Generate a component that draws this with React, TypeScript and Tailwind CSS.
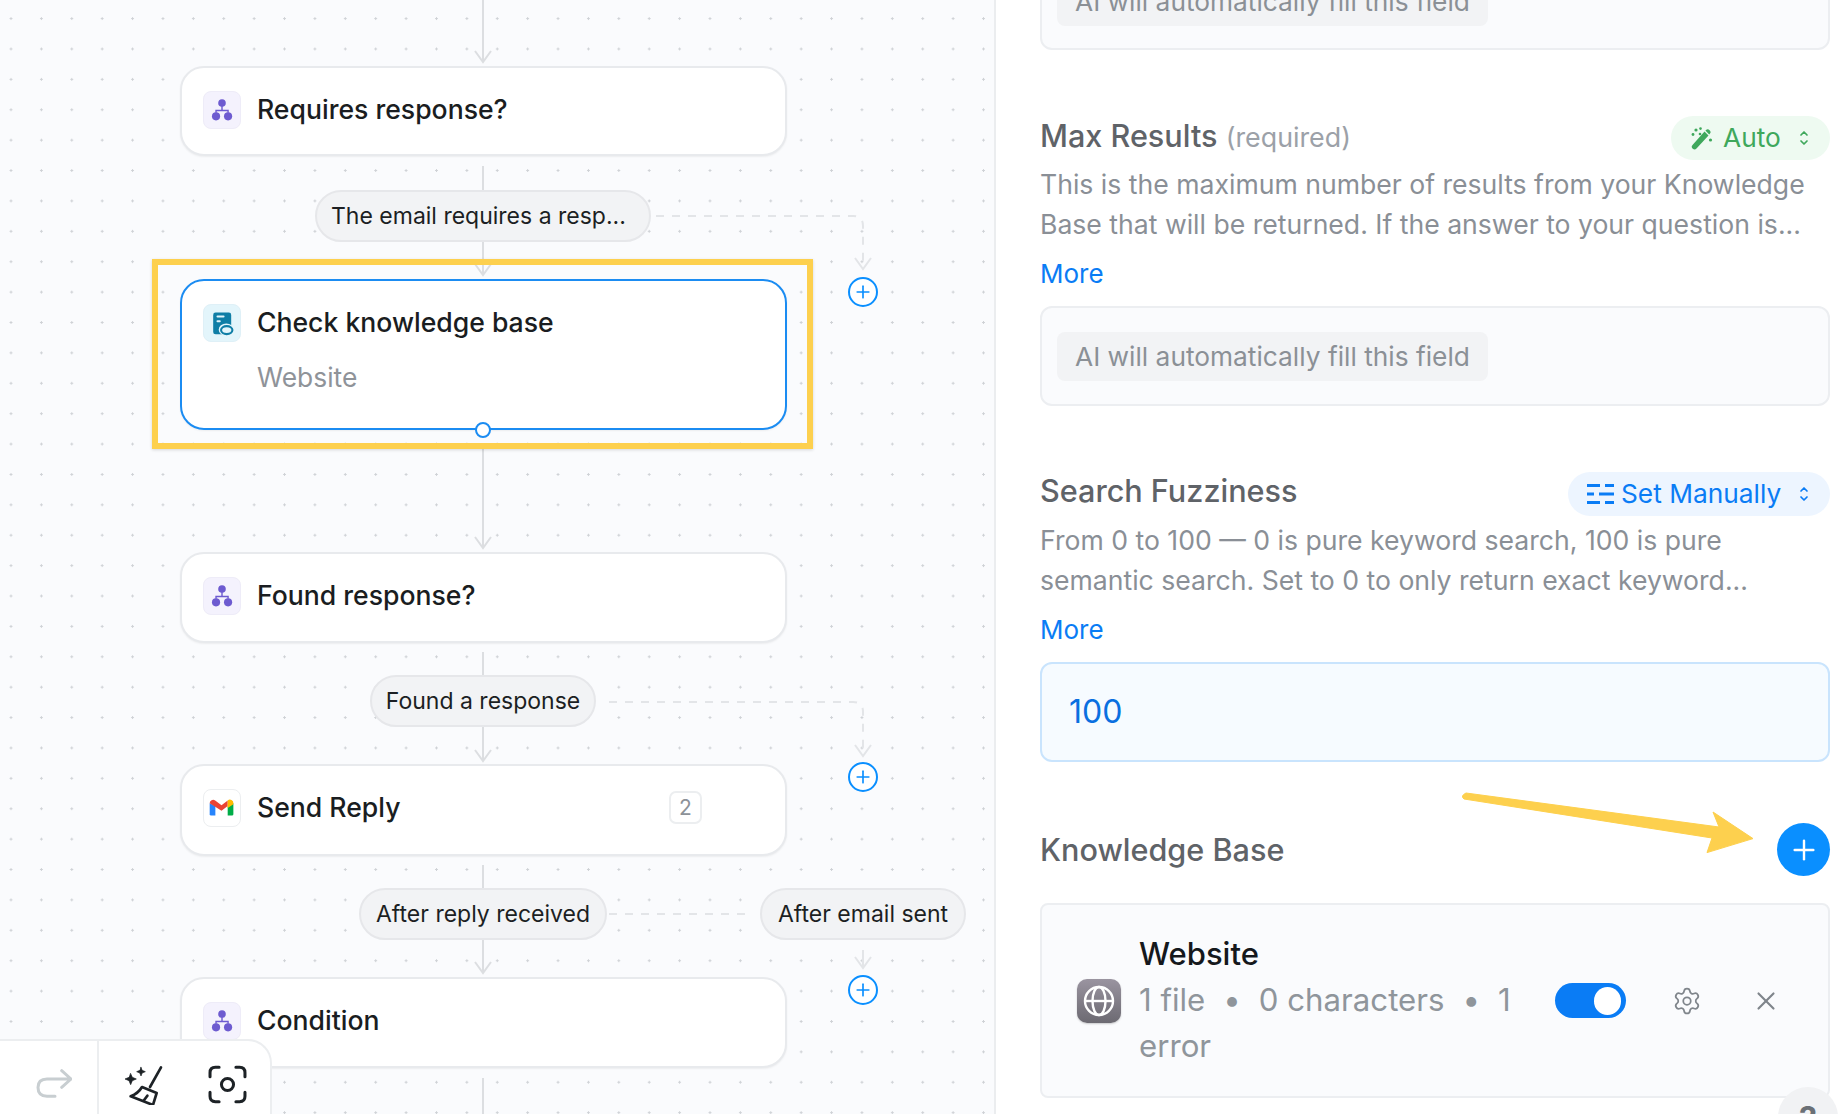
import React from "react";
import { Settings, X, Plus } from "lucide-react";

const BranchIcon = () => (
  <svg width="38" height="38" viewBox="0 0 38 38" fill="#6d5bd0">
    <circle cx="19" cy="11.7" r="4" />
    <circle cx="12.7" cy="25.7" r="4.3" />
    <circle cx="25.4" cy="25.7" r="4.3" />
    <path d="M19 14v5.5M12.7 22v-2.5h12.7V22" fill="none" stroke="#6d5bd0" strokeWidth="1.5" />
  </svg>
);

const KbIcon = () => (
  <svg width="38" height="38" viewBox="0 0 38 38">
    <rect x="9.7" y="8" width="19" height="23" rx="2.5" fill="#0f7ea6" />
    <rect x="13.2" y="11" width="8.5" height="2.2" rx="1" fill="#e3f5fb" />
    <rect x="13.2" y="16" width="4.5" height="2.2" rx="1" fill="#e3f5fb" />
    <ellipse cx="23.5" cy="26" rx="8" ry="6.5" fill="#e3f5fb" />
    <ellipse cx="24" cy="26.5" rx="6" ry="4.2" fill="none" stroke="#0f7ea6" strokeWidth="2.2" />
  </svg>
);

const GmailIcon = () => (
  <svg width="38" height="38" viewBox="0 0 38 38">
    <path d="M6 14v11.5A1.5 1.5 0 0 0 7.5 27H12V17Z" fill="#2684fc" />
    <path d="M25 17v10h4.5a1.5 1.5 0 0 0 1.5-1.5V14Z" fill="#00ac47" />
    <path d="M6 14a3.6 3.6 0 0 1 5.8-2.9L18.5 16l6.5-5v6l-6.5 5L6 14Z" fill="#ea4335" />
    <path d="M25 11a3.6 3.6 0 0 1 6 3v1l-6 4Z" fill="#ffba00" />
  </svg>
);

function Node({ className, icon, tile, title, sub, badge, border = "border-2 border-[#e8eaed]" }: { className: string; icon: React.ReactNode; tile: string; title: string; sub?: string; badge?: string; border?: string }) {
  return (
    <div className={`absolute left-[180px] w-[607px] rounded-[24px] bg-white shadow-[0_1px_2px_rgba(0,0,0,0.06)] ${border} ${className}`}>
      <div className="flex items-start pl-[21px] pt-[23px]">
        <div className={`flex h-[38px] w-[38px] shrink-0 items-center justify-center rounded-[8px] border ${tile}`}>{icon}</div>
        <div className="ml-[16px] -mt-[1px] text-[26.6px] leading-[38px] font-[450] text-[#1a1d21]">{title}</div>
        {badge && (
          <div className="ml-auto mr-[83px] mt-[2px] flex h-[33px] w-[33px] items-center justify-center rounded-[7px] border-2 border-[#eceef0] text-[21px] text-[#8d9298]">
            {badge}
          </div>
        )}
      </div>
      {sub && <div className="ml-[75px] mt-[16px] text-[26.4px] leading-[38px] text-[#8f9399]">{sub}</div>}
    </div>
  );
}

function Pill({ className, children }: { className: string; children: string }) {
  return (
    <div className={`absolute flex h-[52px] items-center rounded-full border-2 border-[#e6e7ea] bg-[#f2f3f5] text-[23px] whitespace-nowrap text-[#1c1f23] ${className}`}>
      {children}
    </div>
  );
}

function AddBtn({ className }: { className: string }) {
  return (
    <div className={`absolute left-[848px] flex h-[30px] w-[30px] items-center justify-center rounded-full border-[2.5px] border-[#0a8fff] bg-white ${className}`}>
      <Plus size={20} strokeWidth={2} color="#0a8fff" />
    </div>
  );
}

const Updown = () => (
  <svg width="12" height="16" viewBox="0 0 12 16" fill="none" stroke="currentColor" strokeWidth="1.7" strokeLinecap="round" strokeLinejoin="round">
    <path d="M3 5l3-3 3 3M3 11l3 3 3-3" />
  </svg>
);

const Wand = () => (
  <svg width="23" height="23" viewBox="0 0 23 23" fill="#3fa85c">
    <path d="M14.5 4.5l4 4L6.5 21.5a2.4 2.4 0 0 1-4-3.5Z" />
    <path d="M15.8 3.2a2.6 2.6 0 0 1 3.8 0 2.6 2.6 0 0 1 0 3.8l-.4.4-3.8-3.8Z" />
    <circle cx="6" cy="3" r="1.6" />
    <circle cx="10.5" cy="1.6" r="1.3" />
    <circle cx="3" cy="7.5" r="1.4" />
    <circle cx="10" cy="7" r="1.3" />
    <circle cx="20.5" cy="13" r="1.6" />
  </svg>
);

const Manual = () => (
  <svg width="27" height="22" viewBox="0 0 27 22" stroke="#0a7cf5" strokeWidth="2.8" fill="none">
    <path d="M0 2.5h13M18 2.5h9M0 11h7M12 11h15M0 19.5h13M18 19.5h9" />
  </svg>
);

function FieldBox({ children, className = "" }: { children: React.ReactNode; className?: string }) {
  return (
    <div className={`h-[100px] rounded-[12px] border-2 border-[#eceef1] bg-[#fafbfd] pl-[15px] ${className}`}>
      <div className="inline-flex h-[49px] w-[431px] items-center rounded-[8px] bg-[#f2f3f5] pl-[18px] text-[26.3px] text-[#8b9096]">{children}</div>
    </div>
  );
}

function ModePill({ tone, icon, label, width, gap }: { tone: string; icon: React.ReactNode; label: string; width: string; gap: string }) {
  return (
    <div className={`flex h-[44px] items-center rounded-full pl-[19px] pr-[20px] text-[26.3px] ${tone} ${width}`}>
      {icon}
      <span className={`flex-1 ${gap}`}>{label}</span>
      <Updown />
    </div>
  );
}

const Head = ({ x, y }: { x: number; y: number }) => <path d={`M${x - 8} ${y - 11}L${x} ${y}L${x + 8} ${y - 11}`} />;

export default function App() {
  return (
    <div className="relative flex h-[1114px] w-[1848px] overflow-hidden bg-white font-['Inter',sans-serif]">
      <div className="relative h-full w-[996px] shrink-0 border-r-2 border-[#ebedef] bg-[#fafbfd] bg-[radial-gradient(circle,#cfd2d6_1px,transparent_1.3px)] bg-size-[30.4px_30.4px] bg-position-[-4.2px_3.4px]">
        <svg className="absolute left-0 top-0" width="994" height="1114" fill="none" stroke="#dcdee1" strokeWidth="2">
          <path d="M483 0V62M483 166V275M483 449V548M483 652V761M483 865V973M483 1078V1114" />
          <Head x={483} y={62} />
          <Head x={483} y={275} />
          <Head x={483} y={548} />
          <Head x={483} y={761} />
          <Head x={483} y={973} />
          <g stroke="#e3e5e8">
            <path d="M656 216H853Q863 216 863 226V262M609 702H853Q863 702 863 712V748M609 914H753" strokeDasharray="8 8" />
            <Head x={863} y={269} />
            <Head x={863} y={756} />
            <path d="M863 950V968" />
            <Head x={863} y={968} />
          </g>
        </svg>

        <Node className="top-[66px] h-[90px]" tile="border-[#eeecf8] bg-[#f4f2fd]" icon={<BranchIcon />} title="Requires response?" />
        <Pill className="left-[315px] top-[190px] w-[336px] pl-[14px]">The email requires a resp...</Pill>
        <Node className="top-[279px] h-[151px]" border="border-2 border-[#1b8cf2]" tile="border-[#dff0f7] bg-[#e3f5fb]" icon={<KbIcon />} title="Check knowledge base" sub="Website" />
        <div className="absolute left-[475px] top-[422px] h-[16px] w-[16px] rounded-full border-2 border-[#1b8cf2] bg-white" />
        <div className="absolute left-[152px] top-[259px] h-[190px] w-[661px] border-[6px] border-[#fdd04e] shadow-[0_1px_3px_rgba(0,0,0,0.15)]" />
        <AddBtn className="top-[277px]" />

        <Node className="top-[552px] h-[91px]" tile="border-[#eeecf8] bg-[#f4f2fd]" icon={<BranchIcon />} title="Found response?" />
        <Pill className="left-[370px] top-[675px] w-[226px] justify-center">Found a response</Pill>
        <AddBtn className="top-[762px]" />

        <Node className="top-[764px] h-[92px]" tile="border-[#eceef0] bg-white" icon={<GmailIcon />} title="Send Reply" badge="2" />
        <Pill className="left-[359px] top-[888px] w-[248px] justify-center">After reply received</Pill>
        <Pill className="left-[760px] top-[888px] w-[206px] justify-center">After email sent</Pill>
        <AddBtn className="top-[975px]" />

        <Node className="top-[977px] h-[91px]" tile="border-[#eeecf8] bg-[#f4f2fd]" icon={<BranchIcon />} title="Condition" />

        <div className="absolute bottom-0 left-0 flex h-[75px] w-[272px] rounded-tr-[24px] border-r-2 border-t-2 border-[#eceef0] bg-white">
          <div className="flex w-[99px] items-center border-r-2 border-[#eceef0] pl-[36px] pt-[12px]">
            <svg width="36" height="29" viewBox="0 0 36 29" fill="none" stroke="#c8ced1" strokeWidth="3" strokeLinecap="round" strokeLinejoin="round">
              <path d="M25.7 1.7L35 10l-9.3 8.3M35 10H11Q2 10 2 18.5T11 27.3H19" />
            </svg>
          </div>
          <div className="flex flex-1 items-center gap-[44px] pl-[26px] pt-[14px]">
            <svg width="38" height="40" viewBox="375 130 114 120" fill="none" stroke="#1d2226" strokeWidth="8" strokeLinecap="round" strokeLinejoin="round">
              <path d="M483 137L450 196" />
              <path d="M426 196L470 214L459 250L392 224Q415 215 426 196Z" />
              <path d="M432 236L442 222" />
              <path d="M392 156l5 11 12 5-12 5-5 12-5-12-12-5 12-5Z" fill="#1d2226" strokeWidth="2" />
              <path d="M423 137l3.5 9 9.5 4-9.5 4-3.5 9-3.5-9-9.5-4 9.5-4Z" fill="#1d2226" strokeWidth="2" />
            </svg>
            <svg width="41" height="41" viewBox="622 134 122 122" fill="none" stroke="#1d2226" strokeWidth="9" strokeLinecap="round">
              <path d="M631 172V160Q631 144 647 144H658M708 144H719Q735 144 735 160V172M735 218V230Q735 246 719 246H708M658 246H647Q631 246 631 230V218" />
              <circle cx="683" cy="195" r="18" />
            </svg>
          </div>
        </div>
      </div>

      <div className="h-full flex-1 pl-[44px] pr-[18px]">
        <FieldBox className="-mt-[50px] pt-[25px]">AI will automatically fill this field</FieldBox>

        <div className="mt-[66px] flex h-[44px] items-center justify-between">
          <div className="pb-[4px] text-[30.6px] font-[450] text-[#5f6368]">
            Max Results <span className="text-[26.8px] font-normal text-[#9ca1a8]">(required)</span>
          </div>
          <ModePill tone="bg-[#eefaf1] text-[#3fa85c]" icon={<Wand />} label="Auto" width="w-[159px]" gap="ml-[10px]" />
        </div>
        <div className="mt-[4px] text-[26.6px] leading-[40px] whitespace-nowrap text-[#8a8f96]">
          <div>This is the maximum number of results from your Knowledge</div>
          <div>Base that will be returned. If the answer to your question is...</div>
        </div>
        <div className="mt-[10px] text-[26px] leading-[40px] text-[#0a7cf5]">More</div>
        <FieldBox className="mt-[12px] pt-[24px]">AI will automatically fill this field</FieldBox>

        <div className="mt-[66px] flex h-[44px] items-center justify-between">
          <div className="pb-[6px] text-[30.6px] font-[450] text-[#5f6368]">Search Fuzziness</div>
          <ModePill tone="bg-[#edf5ff] text-[#0a7cf5]" icon={<Manual />} label="Set Manually" width="w-[262px]" gap="ml-[7px]" />
        </div>
        <div className="mt-[4px] text-[26.6px] leading-[40px] whitespace-nowrap text-[#8a8f96]">
          <div>From 0 to 100 — 0 is pure keyword search, 100 is pure</div>
          <div>semantic search. Set to 0 to only return exact keyword...</div>
        </div>
        <div className="mt-[10px] text-[26px] leading-[40px] text-[#0a7cf5]">More</div>
        <div className="mt-[12px] flex h-[100px] items-center rounded-[12px] border-2 border-[#c9e4fd] bg-[#f6fbff] pl-[27px] text-[32px] text-[#0a6fe0]">100</div>

        <div className="mt-[61px] flex h-[53px] items-center justify-between">
          <div className="pt-[1px] text-[30.6px] font-[450] text-[#5f6368]">Knowledge Base</div>
          <div className="flex h-[53px] w-[53px] items-center justify-center rounded-full bg-[#0a8fff]">
            <Plus size={32} strokeWidth={1.8} color="white" />
          </div>
        </div>

        <div className="mt-[27px] flex h-[195px] items-center rounded-[8px] border-2 border-[#eceef1] bg-[#fafbfd] pl-[35px]">
          <div className="flex h-[44px] w-[44px] shrink-0 items-center justify-center rounded-[10px] bg-linear-to-b from-[#9a94a0] to-[#6c6a72] shadow-[0_1px_2px_rgba(0,0,0,0.2)]">
            <svg width="34" height="34" viewBox="0 0 34 34" fill="none" stroke="white" strokeWidth="2.4">
              <circle cx="17" cy="17" r="14" />
              <ellipse cx="17" cy="17" rx="6.5" ry="14" />
              <path d="M3 17H31" />
            </svg>
          </div>
          <div className="ml-[18px] w-[396px] shrink-0 pb-[2px] text-[31.2px] leading-[46px] text-[#8f959b]">
            <div className="text-[31px] font-[450] text-[#15181c]">Website</div>
            <div>
              1 file<span className="mx-[18px]">•</span>0 characters<span className="mx-[18px]">•</span>1 error
            </div>
          </div>
          <div className="ml-[20px] flex h-[35px] w-[71px] shrink-0 items-center justify-end rounded-full bg-[#0a7cf5] pr-[5px]">
            <div className="h-[28px] w-[27px] rounded-full bg-white" />
          </div>
          <Settings className="ml-[46px] shrink-0" size={30} strokeWidth={1.4} color="#7f858b" />
          <X className="ml-[49px] shrink-0" size={30} strokeWidth={1.7} color="#7f858b" />
        </div>
      </div>

      <svg className="absolute left-[1462px] top-[790px]" width="295" height="66" viewBox="1462 790 295 66">
        <path d="M1466 793L1719 827L1713 812L1753 838.6L1707 852.6L1712 838L1464 799Q1460 796 1466 793Z" fill="#fdd04e" stroke="#fdd04e" strokeWidth="1" strokeLinejoin="round" />
      </svg>

      <div className="absolute left-[1778px] top-[1087px] flex h-[60px] w-[60px] justify-center rounded-full bg-[#f1f2f4] pt-[12px] text-[32px] font-bold leading-[40px] text-[#6b7076]">?</div>
    </div>
  );
}
